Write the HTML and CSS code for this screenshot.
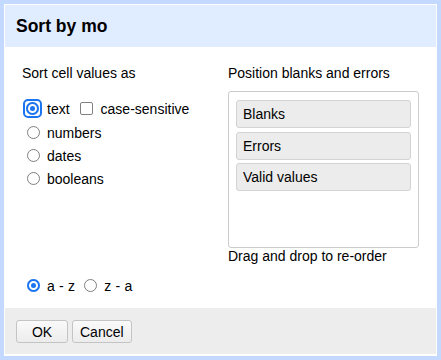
FILE: index.html
```html
<!DOCTYPE html>
<html>
<head>
<meta charset="utf-8">
<link rel="stylesheet" href="styles.css">
</head>
<body>
<div class="dialog">
  <div class="dlg-header">Sort by mo</div>
  <div class="dlg-body">
    <div class="cols">
      <div class="col-left">
        <div class="label">Sort cell values as</div>
        <div class="opt opt-first">
          <span class="focus-ring"><span class="radio checked"></span></span><span class="txt">text</span>
          <span class="checkbox"></span><span class="txt">case-sensitive</span>
        </div>
        <div class="opt"><span class="radio"></span><span class="txt">numbers</span></div>
        <div class="opt"><span class="radio"></span><span class="txt">dates</span></div>
        <div class="opt"><span class="radio"></span><span class="txt">booleans</span></div>
      </div>
      <div class="col-right">
        <div class="label">Position blanks and errors</div>
        <div class="list">
          <div class="item">Blanks</div>
          <div class="item">Errors</div>
          <div class="item">Valid values</div>
        </div>
        <div class="hint">Drag and drop to re-order</div>
      </div>
    </div>
    <div class="order">
      <span class="radio checked"></span><span class="txt">a - z</span>
      <span class="radio second"></span><span class="txt">z - a</span>
    </div>
  </div>
  <div class="dlg-footer">
    <button class="btn btn-ok">OK</button>
    <button class="btn">Cancel</button>
  </div>
</div>
</body>
</html>
```

FILE: styles.css
```css
html, body {
  margin: 0;
  padding: 0;
}
body {
  width: 441px;
  height: 360px;
  background: #c3d9ff;
  font-family: "Liberation Sans", Arial, sans-serif;
  font-size: 14px;
  color: #000;
  overflow: hidden;
}
.dialog {
  margin: 4px 4px 0 4px;
  height: 352px;
  box-sizing: border-box;
  border: 1px solid #fff;
  border-bottom-width: 2px;
  background: #fff;
  display: flex;
  flex-direction: column;
}
.dlg-header {
  height: 42px;
  background: #e0ecff;
  display: flex;
  align-items: center;
  padding-left: 11px;
  font-weight: bold;
  font-size: 17.5px;
  line-height: 20px;
}
.dlg-body {
  height: 261px;
  box-sizing: border-box;
  padding: 18px 17px 0 17px;
}
.cols {
  display: grid;
  grid-template-columns: 206px 191px;
}
.label {
  line-height: 16px;
  height: 16px;
}
.opt {
  height: 23px;
  display: flex;
  align-items: center;
  line-height: 16px;
}
.opt-first {
  margin-top: 15px;
  height: 25px;
}
.radio {
  width: 13px;
  height: 13px;
  box-sizing: border-box;
  border-radius: 50%;
  border: 1px solid #808080;
  background: #fff;
  margin: 0 7px 0 5px;
  flex: none;
}
.radio.checked {
  border: none;
  background: #1b74f0;
  box-shadow: inset 0 0 0 2px #1b74f0, inset 0 0 0 4px #fff;
}
.focus-ring {
  display: flex;
  flex: none;
  padding: 1px;
  border: 2.5px solid #1b74f0;
  border-radius: 5px;
  margin: 0 5px 0 1px;
}
.focus-ring .radio {
  margin: 0;
}
.checkbox {
  width: 13px;
  height: 13px;
  box-sizing: border-box;
  border: 1px solid #808080;
  border-radius: 2px;
  background: #fff;
  margin: 0 8px 0 10px;
  flex: none;
}
.list {
  margin-top: 10px;
  height: 157px;
  box-sizing: border-box;
  border: 1px solid #ccc;
  border-radius: 3px;
  padding: 8px 7px;
  display: flex;
  flex-direction: column;
  gap: 3.5px;
}
.item {
  height: 28px;
  box-sizing: border-box;
  border: 1px solid #d3d3d3;
  border-radius: 3px;
  background: #ececec;
  padding-left: 6px;
  display: flex;
  align-items: center;
}
.hint {
  line-height: 16px;
}
.order {
  margin-top: 10px;
  height: 23px;
  display: flex;
  align-items: center;
  line-height: 16px;
}
.order .radio.second {
  margin-left: 9px;
}
.order .txt {
  letter-spacing: 0.2px;
}
.dlg-footer {
  height: 46px;
  box-sizing: border-box;
  background: #ededed;
  padding: 12px 0 0 11px;
  display: flex;
  align-items: flex-start;
  gap: 4px;
}
.btn {
  height: 23px;
  box-sizing: border-box;
  font-family: "Liberation Sans", Arial, sans-serif;
  font-size: 14px;
  color: #000;
  padding: 0 7px;
  border: 1px solid #c4c4c4;
  border-radius: 3px;
  background: linear-gradient(#fafafa, #ececec);
  line-height: 20px;
}
.btn-ok {
  min-width: 52px;
}
```
